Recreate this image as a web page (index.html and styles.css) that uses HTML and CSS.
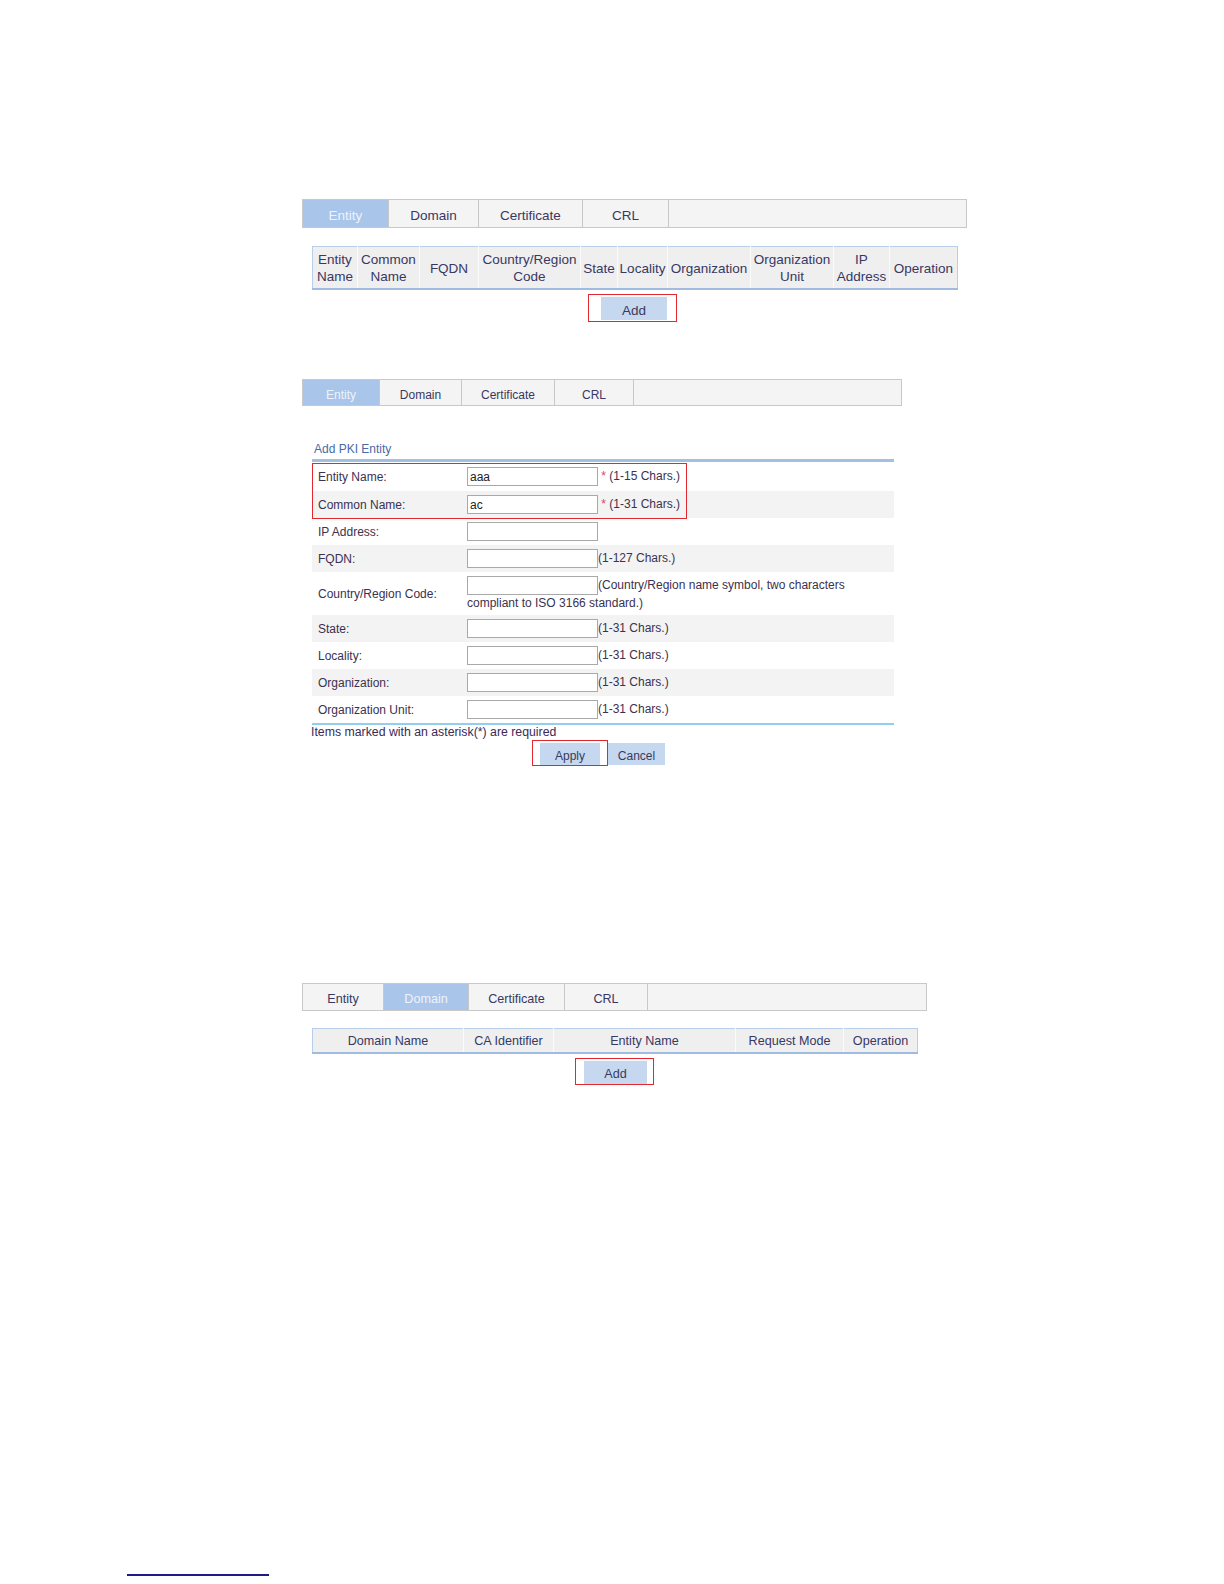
FILE: index.html
```html
<!DOCTYPE html>
<html lang="en">
<head>
  <meta charset="UTF-8" />
  <title>PKI Entity</title>
  <link rel="stylesheet" href="styles.css">
</head>
<body>

  <div class="shots">

    <!-- entity list -->
    <section class="shot shot-a">
      <div class="tabs">
        <span class="tab active">Entity</span>
        <span class="tab">Domain</span>
        <span class="tab">Certificate</span>
        <span class="tab">CRL</span>
      </div>
      <div class="grid-wrap">
        <table class="grid">
          <colgroup>
            <col class="c45"><col class="c62"><col class="c59"><col class="c102"><col class="c37">
            <col class="c50"><col class="c83"><col class="c83"><col class="c56"><col class="c68">
          </colgroup>
          <thead>
            <tr>
              <th>Entity<br>Name</th>
              <th>Common<br>Name</th>
              <th>FQDN</th>
              <th>Country/Region<br>Code</th>
              <th>State</th>
              <th>Locality</th>
              <th>Organization</th>
              <th>Organization<br>Unit</th>
              <th>IP<br>Address</th>
              <th>Operation</th>
            </tr>
          </thead>
        </table>
        <div class="actions">
          <span class="mark"><button class="btn">Add</button></span>
        </div>
      </div>
    </section>

    <!-- add entity form -->
    <section class="shot shot-b">
      <div class="tabs">
        <span class="tab active">Entity</span>
        <span class="tab">Domain</span>
        <span class="tab">Certificate</span>
        <span class="tab">CRL</span>
      </div>
      <div class="form">
        <div class="form-title">Add PKI Entity</div>
        <div class="rows">
          <div class="row first">
            <span class="label">Entity Name:</span>
            <span class="field"><input class="box" value="aaa"> <span class="req">*</span> (1-15 Chars.)</span>
          </div>
          <div class="row alt">
            <span class="label">Common Name:</span>
            <span class="field"><input class="box" value="ac"> <span class="req">*</span> (1-31 Chars.)</span>
          </div>
          <div class="row">
            <span class="label">IP Address:</span>
            <span class="field"><input class="box"></span>
          </div>
          <div class="row alt">
            <span class="label">FQDN:</span>
            <span class="field"><input class="box">(1-127 Chars.)</span>
          </div>
          <div class="row tall">
            <span class="label">Country/Region Code:</span>
            <span class="field"><input class="box">(Country/Region name symbol, two characters compliant to ISO 3166 standard.)</span>
          </div>
          <div class="row alt">
            <span class="label">State:</span>
            <span class="field"><input class="box">(1-31 Chars.)</span>
          </div>
          <div class="row">
            <span class="label">Locality:</span>
            <span class="field"><input class="box">(1-31 Chars.)</span>
          </div>
          <div class="row alt">
            <span class="label">Organization:</span>
            <span class="field"><input class="box">(1-31 Chars.)</span>
          </div>
          <div class="row">
            <span class="label">Organization Unit:</span>
            <span class="field"><input class="box">(1-31 Chars.)</span>
          </div>
          <span class="mark-rows"></span>
        </div>
        <div class="note">Items marked with an asterisk(*) are required</div>
        <div class="form-buttons">
          <span class="mark mark-apply"><button class="btn btn-apply">Apply</button></span>
          <button class="btn btn-cancel">Cancel</button>
        </div>
      </div>
    </section>

    <!-- domain list -->
    <section class="shot shot-c">
      <div class="tabs">
        <span class="tab">Entity</span>
        <span class="tab active">Domain</span>
        <span class="tab">Certificate</span>
        <span class="tab">CRL</span>
      </div>
      <div class="grid-wrap">
        <table class="grid">
          <colgroup>
            <col class="c151"><col class="c90"><col class="c182"><col class="c108"><col class="c74">
          </colgroup>
          <thead>
            <tr>
              <th>Domain Name</th>
              <th>CA Identifier</th>
              <th>Entity Name</th>
              <th>Request Mode</th>
              <th>Operation</th>
            </tr>
          </thead>
        </table>
        <div class="actions">
          <span class="mark"><button class="btn">Add</button></span>
        </div>
      </div>
    </section>

  </div>

  <div class="footnote-rule"></div>

</body>
</html>
```

FILE: styles.css
```css
body {
  margin: 0;
  background-color: #fff;
  color: #383863;
  font-family: "Liberation Sans", Arial, sans-serif;
}
.shots {
  padding: 199px 0 0 302px;
}

/* tab bar */
.tabs {
  display: flex;
  box-sizing: border-box;
  border: 1px solid #c8c8c8;
  background-color: #f4f4f4;
}
.tab {
  display: flex;
  align-items: center;
  justify-content: center;
  box-sizing: border-box;
  border-right: 1px solid #c8c8c8;
  padding-top: 4px;
  color: #383863;
}
.tab.active {
  background-color: #a9c5ea;
  color: #eef3fb;
}

/* list tables */
.grid-wrap {
  margin-left: 10px;
}
.grid {
  border-collapse: collapse;
  table-layout: fixed;
  width: 100%;
  border: 1px solid #b9cee9;
  border-bottom: 2px solid #9fbbe0;
}
.grid th {
  background-color: #efefef;
  border-left: 1px solid #fbfbfb;
  font-weight: normal;
  color: #383863;
  text-align: center;
  vertical-align: middle;
  padding: 1px 1px 0;
}
.grid th:first-child {
  border-left: none;
}
.actions {
  display: flex;
  justify-content: center;
  margin-top: 4px;
}
.mark {
  display: inline-block;
  border: 1px solid #e0282e;
}
.btn {
  border: none;
  margin: 0;
  background-color: #c6d7f0;
  color: #3a3a5c;
  font-family: inherit;
  padding: 3px 0 0;
  height: 23px;
}

/* first shot */
.shot-a {
  font-size: 13.5px;
}
.shot-a .tabs {
  width: 665px;
  height: 29px;
}
.shot-a .tab:nth-child(1) { width: 86px; }
.shot-a .tab:nth-child(2) { width: 90px; }
.shot-a .tab:nth-child(3) { width: 104px; }
.shot-a .tab:nth-child(4) { width: 86px; }
.shot-a .grid-wrap {
  width: 645px;
  margin-top: 18px;
}
.shot-a .grid th {
  height: 40px;
  line-height: 17px;
}
.shot-a .mark {
  padding: 2px 9px 1px 12px;
  margin-right: 4px;
}
.shot-a .btn {
  width: 66px;
  font-size: 13.5px;
}
.c45 { width: 45px; }
.c62 { width: 62px; }
.c59 { width: 59px; }
.c102 { width: 102px; }
.c37 { width: 37px; }
.c50 { width: 50px; }
.c83 { width: 83px; }
.c56 { width: 56px; }
.c68 { width: 68px; }

/* second shot: form */
.shot-b {
  margin-top: 57px;
  font-size: 12px;
}
.shot-b .tabs {
  width: 600px;
  height: 27px;
}
.shot-b .tab:nth-child(1) { width: 77px; }
.shot-b .tab:nth-child(2) { width: 82px; }
.shot-b .tab:nth-child(3) { width: 93px; }
.shot-b .tab:nth-child(4) { width: 79px; }
.form {
  margin-left: 10px;
  width: 582px;
}
.form-title {
  margin-top: 36px;
  padding: 0 0 3px 2px;
  line-height: 14px;
  color: #4a6aa6;
  border-bottom: 3px solid #a4bfe2;
}
.rows {
  position: relative;
  border-bottom: 2px solid #93cdf0;
}
.row {
  display: grid;
  grid-template-columns: 155px 1fr;
  align-items: center;
  min-height: 27px;
  color: #3b3150;
}
.row.first {
  min-height: 29px;
}
.row.alt {
  background-color: #f3f3f3;
}
.row.tall {
  padding: 4px 0 3px;
  min-height: 35px;
}
.label {
  padding-left: 6px;
}
.field {
  line-height: 17px;
}
.box {
  width: 131px;
  height: 19px;
  box-sizing: border-box;
  border: 1px solid #a9a9a9;
  margin: 0;
  padding: 0 2px;
  font-family: inherit;
  font-size: 12px;
  color: #222;
  vertical-align: middle;
}
.req {
  color: #e0405a;
}
.mark-rows {
  position: absolute;
  top: 1px;
  left: 0;
  width: 375px;
  height: 56px;
  box-sizing: border-box;
  border: 1px solid #e0282e;
}
.note {
  margin-left: -1px;
  line-height: 15px;
  color: #3b2a55;
  font-size: 12.3px;
}
.form-buttons {
  display: flex;
  align-items: flex-end;
  padding-left: 220px;
}
.mark-apply {
  padding: 2px 7px 0 7px;
}
.btn-apply {
  width: 60px;
  height: 22px;
  font-size: 12px;
}
.btn-cancel {
  width: 57px;
  height: 22px;
  font-size: 12px;
  margin-bottom: 1px;
}

/* third shot */
.shot-c {
  margin-top: 217px;
  font-size: 12.6px;
}
.shot-c .tabs {
  width: 625px;
  height: 28px;
}
.shot-c .tab:nth-child(1) { width: 81px; }
.shot-c .tab:nth-child(2) { width: 85px; }
.shot-c .tab:nth-child(3) { width: 96px; }
.shot-c .tab:nth-child(4) { width: 83px; }
.shot-c .grid-wrap {
  width: 605px;
  margin-top: 17px;
}
.shot-c .grid th {
  height: 22px;
  line-height: 16px;
}
.shot-c .mark {
  padding: 2px 6px 0 8px;
}
.shot-c .btn {
  width: 63px;
  font-size: 12.6px;
}
.c151 { width: 151px; }
.c90 { width: 90px; }
.c182 { width: 182px; }
.c108 { width: 108px; }
.c74 { width: 74px; }

.footnote-rule {
  margin: 489px 0 0 127px;
  width: 142px;
  border-top: 2px solid #1c1c86;
}
```
